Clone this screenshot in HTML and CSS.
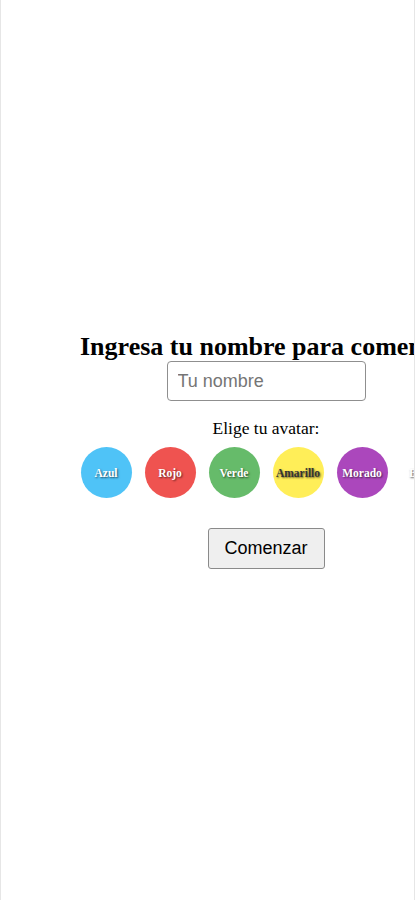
FILE: index.html
```html
<!DOCTYPE html>
<html lang="es">
<head>
<meta charset="utf-8">
<title>Ingresa tu nombre</title>
<link rel="stylesheet" href="styles.css">
</head>
<body>
<div class="frame">
  <div class="start">
    <h1 class="title">Ingresa tu nombre para comenzar</h1>
    <input class="name" type="text" placeholder="Tu nombre">
    <p class="label">Elige tu avatar:</p>
    <div class="avatars">
      <div class="avatar azul">Azul</div>
      <div class="avatar rojo">Rojo</div>
      <div class="avatar verde">Verde</div>
      <div class="avatar amarillo">Amarillo</div>
      <div class="avatar morado">Morado</div>
      <div class="avatar blanco">Blanco</div>
    </div>
    <button class="go" type="button">Comenzar</button>
  </div>
</div>
</body>
</html>
```

FILE: styles.css
```css
html, body {
  margin: 0;
  padding: 0;
  background: #ffffff;
  overflow: hidden;
}
.frame {
  box-sizing: border-box;
  width: 415px;
  height: 900px;
  border-left: 1px solid #e6e6e6;
  border-right: 1px solid #e6e6e6;
  padding-top: 328px;
  overflow: hidden;
}
.start {
  margin-left: 79px;
  width: 372px;
  display: flex;
  flex-direction: column;
  align-items: center;
  font-family: "Liberation Serif", "Times New Roman", serif;
  color: #000;
}
.title {
  align-self: flex-start;
  margin: 0;
  font-size: 26px;
  font-weight: bold;
  line-height: 38px;
  white-space: nowrap;
}
.name {
  box-sizing: border-box;
  margin: -5px 0 0 0;
  width: 199px;
  height: 40px;
  padding: 0 10px;
  border: 1px solid #8f8f8f;
  border-radius: 4px;
  font-family: "Liberation Sans", Arial, sans-serif;
  font-size: 18px;
  color: #000;
  background: #fff;
  outline: none;
}
.name::placeholder {
  color: #757575;
}
.label {
  margin: 17px 0 0 0;
  font-size: 17.5px;
  line-height: 20px;
}
.avatars {
  margin-top: 9px;
  display: flex;
  gap: 13px;
}
.avatar {
  width: 51px;
  height: 51px;
  border-radius: 50%;
  display: flex;
  align-items: center;
  justify-content: center;
  font-size: 11.5px;
  font-weight: bold;
  color: #fff;
  text-shadow: 1px 1px 2px rgba(0, 0, 0, 0.6);
}
.azul { background: #4fc3f7; }
.rojo { background: #ef5350; }
.verde { background: #66bb6a; }
.amarillo { background: #ffee58; color: #333; }
.morado { background: #ab47bc; }
.blanco { background: #ffffff; }
.go {
  margin-top: 30px;
  box-sizing: border-box;
  width: 117px;
  height: 41px;
  padding: 0;
  border: 1px solid #8a8a8a;
  border-radius: 3px;
  background: #efefef;
  font-family: "Liberation Sans", Arial, sans-serif;
  font-size: 18px;
  color: #000;
}
```
